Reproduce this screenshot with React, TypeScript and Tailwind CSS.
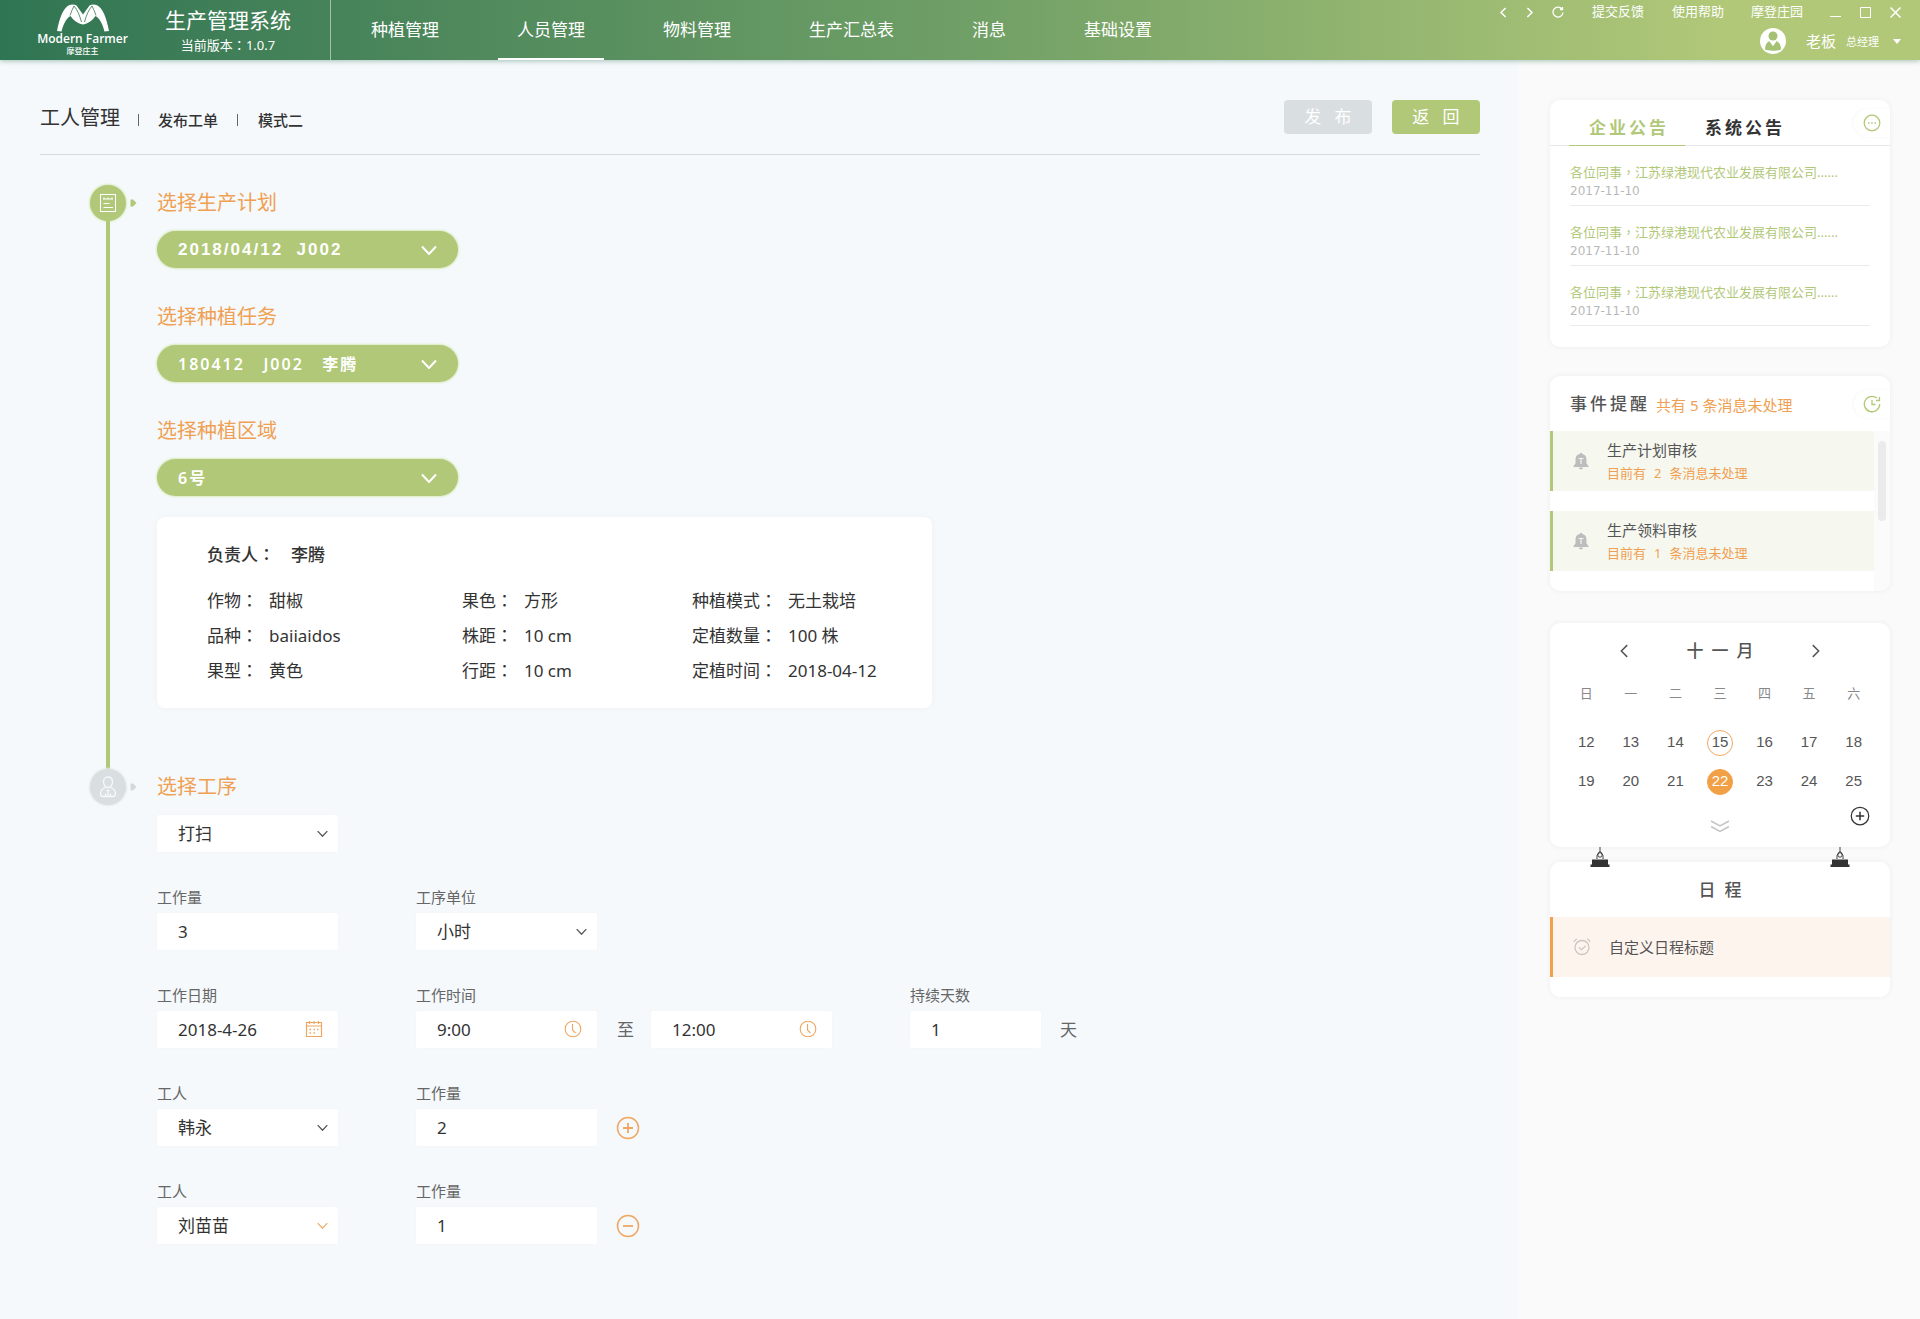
import type { ReactNode } from "react";

type IconProps = { className?: string };

function Chevron({ className = "", dir = "down", weight = 2 }: IconProps & { dir?: "down" | "left" | "right"; weight?: number }) {
  const d = { down: "M1 1.5 8 9 15 1.5", left: "M8 1 1.5 7.5 8 14", right: "M2 1 8.5 7.5 2 14" }[dir];
  return (
    <svg viewBox={dir === "down" ? "0 0 16 10" : "0 0 10 15"} className={className} fill="none" stroke="currentColor" strokeWidth={weight}>
      <path d={d} vectorEffect="non-scaling-stroke" />
    </svg>
  );
}

function Logo() {
  return (
    <svg viewBox="0 0 52 28" className="h-7 w-[52px]" fill="#fff">
      <path d="M0 27C2.500 14 6 4.500 11.500 1.500c2.500-1.200 6-1.200 8 0L26 10.500l6.500-9c2-1.200 5.500-1.200 8 0C46 4.500 49.500 14 52 27l-4.500.5C45.500 20 43 14.500 38.500 12 36 15.500 32 19.500 26 20.500 20 19.500 16 15.500 13.500 12 9 14.500 6.500 20 4.500 27.500z" />
      <path d="M17 2c3.500 4 5.500 9 7.500 16M35 2c-3.500 4-5.500 9-7.500 16M13 11.500C14 8 15.500 5 17 2M39 11.500C38 8 36.500 5 35 2" fill="none" stroke="#37794f" strokeWidth=".8" />
    </svg>
  );
}

function AvatarIcon() {
  return (
    <svg viewBox="0 0 26 26" className="size-[26px]">
      <circle cx="13" cy="13" r="13" fill="#fff" />
      <circle cx="13" cy="8" r="4.500" fill="#a5c274" />
      <path d="M5 21.500c0-4.500 1.500-7 4.500-8.500L13 18l3.500-5c3 1.500 4.500 4 4.500 8.500-2.500 1.500-13.500 1.500-16 0z" fill="#a5c274" />
      <path d="M9.500 13h7L13 18z" fill="#fff" />
    </svg>
  );
}

function ListIcon() {
  return (
    <svg viewBox="0 0 18 20" className="h-5 w-[18px]" fill="none" stroke="#fff" strokeWidth="1.100">
      <path d="M1.500 1.500h15v17h-15z" />
      <path d="M4 6h10M5 4.500v2M9 4.500v2M13 4.500v2M4.500 10.500h6M4.500 14.500h9.500" />
    </svg>
  );
}

function WorkerIcon() {
  return (
    <svg viewBox="0 0 18 22" className="h-[22px] w-[18px]" fill="none" stroke="#f7f9fa" strokeWidth="1.300">
      <path d="M9 1c3 0 4.500 2 4.500 5S11.500 11.500 9 11.500 4.500 9 4.500 6 6 1 9 1z" />
      <path d="M6.500 11.500C3.500 12.500 1.500 14.500 1.500 17.500c0 2 1 3 2.500 3h10c1.500 0 2.500-1 2.500-3 0-3-2-5-5-6M9 14v6M7.500 14.500h3M6.500 20.500v-3M11.500 20.500v-3" />
    </svg>
  );
}

function CalendarIcon() {
  return (
    <svg viewBox="0 0 18 18" className="size-[18px]" fill="none" stroke="#f0a661" strokeWidth="1.200">
      <path d="M1.500 2.500h15v14h-15zM1.500 6h15M4.500 1v3M9 1v3M13.500 1v3" />
      <path d="M4.500 9.500h1.500M8.500 9.500H10M12 9.500h1.500M4.500 13h1.500M8.500 13H10" strokeWidth="1.500" />
    </svg>
  );
}

function ClockIcon() {
  return (
    <svg viewBox="0 0 18 18" className="size-[18px]" fill="none" stroke="#f0a661" strokeWidth="1.100">
      <circle cx="9" cy="9" r="7.800" />
      <path d="M8.500 4v6l3 3" />
    </svg>
  );
}

function SignIcon({ plus = false, className = "" }: IconProps & { plus?: boolean }) {
  return (
    <svg viewBox="0 0 24 24" className={className} fill="none" stroke="currentColor">
      <circle cx="12" cy="12" r="10.500" strokeWidth="1.500" />
      <path d={plus ? "M7 12h10M12 7v10" : "M7 12h10"} strokeWidth="1.800" />
    </svg>
  );
}

function BellIcon() {
  return (
    <svg viewBox="0 0 16 18" className="h-[18px] w-4" fill="#bdbdbd">
      <path d="M8 .5l1.500 1.500c2.500.6 4 2.500 4 5.500v4l2 2.500v1H.5v-1l2-2.500v-4c0-3 1.500-4.900 4-5.500zM6 15.500h4c0 1.300-.8 2-2 2s-2-.7-2-2z" />
      <path d="M5.500 6.500h5M8 6.500v5.500" stroke="#f4f6ee" strokeWidth="1.200" />
    </svg>
  );
}

function AlarmIcon() {
  return (
    <svg viewBox="0 0 18 18" className="size-[18px]" fill="none" stroke="#cfc5c0" strokeWidth="1.300">
      <circle cx="9" cy="9.500" r="7" />
      <path d="M1 4c.5-1.500 1.500-2.500 3-3M17 4c-.5-1.500-1.500-2.500-3-3M6 9.500l2.500 2.200L12.500 8" />
    </svg>
  );
}

function ClipIcon() {
  return (
    <svg viewBox="0 0 20 20" className="size-5" fill="none" stroke="#333">
      <path d="M10 0v5M7 12V8.500L9 5h2l2 3.500V12" strokeWidth=".9" />
      <circle cx="10" cy="8" r="2.200" strokeWidth=".9" />
      <path d="M2 12.500h16v5h1.500V20H.5v-2.500H2z" fill="#333" stroke="none" />
    </svg>
  );
}

/** Full-width punctuation centred in its cell. */
function Mark({ children }: { children: string }) {
  return <span lang="zh-TW" className="font-['Noto_Sans_CJK_TC',sans-serif] leading-none">{children}</span>;
}

function Pill({ id, title, value, font }: { id: string; title: string; value: string; font: string }) {
  return (
    <div className="flex flex-col items-start gap-2.5">
      <label htmlFor={id} className="text-xl leading-9 text-[#f0a052]">{title}</label>
      <div className="relative">
        <select id={id} className={`h-[37px] w-[301px] appearance-none rounded-full bg-[#b1c878] pr-12 pl-[21px] tracking-[2px] text-white shadow-[0_0_2px_1px_#d9ebc0] outline-none ${font}`}>
          <option>{value}</option>
        </select>
        <Chevron className="pointer-events-none absolute top-[14px] right-[21px] h-2.5 w-4 text-white" />
      </div>
    </div>
  );
}

const control = "h-[37px] w-full appearance-none rounded-xs bg-white pl-[21px] text-[17px] text-[#333] shadow-[0_0_2px_#eef4f4] outline-none";

function Field({ id, label, children, className = "w-[181px]" }: { id: string; label: string; children: ReactNode; className?: string }) {
  return (
    <div className={`flex flex-col gap-1.5 ${className}`}>
      <label htmlFor={id} className="text-[15px] leading-[19px] text-[#666]">{label}</label>
      {children}
    </div>
  );
}

function Select({ id, value, label, accent = false }: { id: string; value: string; label?: string; accent?: boolean }) {
  return (
    <div className="relative">
      <select id={id} aria-label={label} className={control}>
        <option>{value}</option>
      </select>
      <Chevron weight={1.3} className={`pointer-events-none absolute top-[15px] right-2.5 h-[7px] w-[11px] ${accent ? "text-[#f0b070]" : "text-[#555]"}`} />
    </div>
  );
}

function Input({ id, value, label, icon }: { id: string; value: string; label?: string; icon?: ReactNode }) {
  return (
    <div className="relative">
      <input id={id} aria-label={label} defaultValue={value} className={control} />
      {icon && <span className="pointer-events-none absolute top-[9px] right-[15px]">{icon}</span>}
    </div>
  );
}

function Step({ icon, active = false, children }: { icon: ReactNode; active?: boolean; children: ReactNode }) {
  return (
    <section className="flex">
      <div className="flex w-[117px] shrink-0 pl-[50px]">
        <div className="flex w-9 flex-col items-center">
          <div className={`flex size-9 shrink-0 items-center justify-center rounded-full ${active ? "bg-[#b1c878] shadow-[0_0_2px_1px_#d9ebc0]" : "bg-[#d9dee0] shadow-[0_0_2px_1px_#e6eaec]"}`}>
            {icon}
          </div>
          {active && <div className="w-1 flex-1 bg-[#b1c878]" />}
        </div>
        <svg viewBox="0 0 7 8" className={`mt-3.5 ml-1 h-2 w-[7px] ${active ? "text-[#b1c878]" : "text-[#d3d9db]"}`}>
          <path d="M.5.500h2.500L6.500 4 3 7.500H.5z" fill="currentColor" />
        </svg>
      </div>
      {children}
    </section>
  );
}

function Card({ children, className = "" }: { children: ReactNode; className?: string }) {
  return <section className={`relative rounded-[10px] bg-white shadow-[0_0_5px_1px_rgba(0,0,0,0.04)] ${className}`}>{children}</section>;
}

function CornerButton({ label, children }: { label: string; children: ReactNode }) {
  return (
    <button aria-label={label} className="flex h-7 w-9 items-center justify-center rounded-l-full text-[#b1c878] shadow-[-1px_0_2px_1px_rgba(0,0,0,0.025)]">
      <svg viewBox="0 0 18 18" className="size-[18px]" fill="none" stroke="currentColor" strokeWidth="1.300">{children}</svg>
    </button>
  );
}

const nav = ["种植管理", "人员管理", "物料管理", "生产汇总表", "消息", "基础设置"];

const facts = [
  [["作物", "甜椒"], ["果色", "方形"], ["种植模式", "无土栽培"]],
  [["品种", "baiiaidos"], ["株距", "10 cm"], ["定植数量", "100 株"]],
  [["果型", "黄色"], ["行距", "10 cm"], ["定植时间", "2018-04-12"]],
];

const reminders = [
  { title: "生产计划审核", count: 2 },
  { title: "生产领料审核", count: 1 },
];

const weeks = [
  [12, 13, 14, 15, 16, 17, 18],
  [19, 20, 21, 22, 23, 24, 25],
];

const workers = [
  { name: "韩永", amount: "2", add: true },
  { name: "刘苗苗", amount: "1", add: false },
];

function Header() {
  return (
    <header className="relative z-10 flex h-[60px] bg-linear-to-r from-[#2f7553] via-[#6f9f66] to-[#b1c878] to-90% text-white shadow-[0_1px_5px_rgba(60,120,90,0.45)]">
      <div className="flex w-[331px] shrink-0 border-r border-white/50">
        <div className="ml-10 flex w-[85px] flex-col items-center pt-1">
          <Logo />
          <span className="mt-px font-['Open_Sans',sans-serif] text-xs leading-3 font-semibold whitespace-nowrap">Modern Farmer</span>
          <span className="text-[8px] leading-[11px] font-medium">摩登庄主</span>
        </div>
        <div className="ml-10 flex flex-col items-center pt-1.5">
          <h1 className="text-[21px] leading-7">生产管理系统</h1>
          <p className="text-[13px] leading-[22px]">当前版本<Mark>：</Mark>1.0.7</p>
        </div>
      </div>
      <nav className="ml-[21px] flex gap-10">
        {nav.map((item) => (
          <a key={item} href="#" className={`border-b-2 px-[19px] pt-px text-[17px] leading-[57px] whitespace-nowrap ${item === "人员管理" ? "border-white" : "border-transparent"}`}>
            {item}
          </a>
        ))}
      </nav>
      <div className="ml-auto flex flex-col items-end pr-[19px] text-[13px]">
        <div className="flex h-6 items-center">
          <button aria-label="后退"><Chevron dir="left" weight={1.5} className="h-[11px] w-[7px]" /></button>
          <button aria-label="前进" className="ml-[19px]"><Chevron dir="right" weight={1.5} className="h-[11px] w-[7px]" /></button>
          <button aria-label="刷新" className="ml-[19px]">
            <svg viewBox="0 0 12 12" className="size-3" fill="none" stroke="currentColor" strokeWidth="1.300">
              <path d="M10 3A5 5 0 1 0 11 6.500M10.500 1v2.500H8" />
            </svg>
          </button>
          <a href="#" className="ml-7">提交反馈</a>
          <a href="#" className="ml-7">使用帮助</a>
          <a href="#" className="ml-[27px]">摩登庄园</a>
          <button aria-label="最小化" className="ml-[27px]">
            <svg viewBox="0 0 11 11" className="size-[11px]" stroke="currentColor"><path d="M0 9.500h11" /></svg>
          </button>
          <button aria-label="最大化" className="ml-[19px]">
            <svg viewBox="0 0 11 11" className="size-[11px]" fill="none" stroke="currentColor"><path d="M.5.5h10v10H.5z" /></svg>
          </button>
          <button aria-label="关闭" className="ml-[19px]">
            <svg viewBox="0 0 11 11" className="size-[11px]" stroke="currentColor" strokeWidth="1.500"><path d="M.5.5l10 10M10.500.5l-10 10" /></svg>
          </button>
        </div>
        <button className="flex h-[34px] items-center">
          <AvatarIcon />
          <span className="ml-5 text-[15px]">老板</span>
          <span className="ml-2.5 pt-0.5 text-[11px]">总经理</span>
          <svg viewBox="0 0 8 5" className="ml-3.5 h-[5px] w-2" fill="currentColor"><path d="M0 0h8L4 5z" /></svg>
        </button>
      </div>
    </header>
  );
}

function WorkOrder() {
  return (
    <main className="flex-1 bg-[#f5f9fc] px-10 pt-10 pb-16 text-[#333] shadow-[1px_0_4px_#e9f2f8]">
      <div className="mr-[-2px] flex h-[55px] items-start border-b border-[#d6dadd]">
        <h2 className="text-xl leading-9">工人管理</h2>
        <span className="mt-3.5 ml-[18px] h-3 w-px bg-[#666]" />
        <span className="ml-[19px] text-[15px] leading-10 font-medium">发布工单</span>
        <span className="mt-3.5 ml-[19px] h-3 w-px bg-[#666]" />
        <span className="ml-5 text-[15px] leading-10 font-medium">模式二</span>
        <button className="ml-auto h-[34px] w-[88px] rounded bg-[#d9dee1] text-[17px] whitespace-pre text-white">{"发   布"}</button>
        <button className="ml-5 h-[34px] w-[88px] rounded bg-[#b1c878] text-[17px] whitespace-pre text-white">{"返   回"}</button>
      </div>

      <div className="pt-[30px]">
        <Step active icon={<ListIcon />}>
          <div className="pb-[61px]">
            <div className="flex flex-col gap-[31px]">
              <Pill id="plan" title="选择生产计划" value={"2018/04/12\u00a0\u00a0J002"} font="font-['Liberation_Sans',sans-serif] text-[17px] font-bold" />
              <Pill id="task" title="选择种植任务" value={"180412\u00a0\u00a0\u00a0J002\u00a0\u00a0\u00a0李腾"} font="text-base font-semibold" />
              <Pill id="area" title="选择种植区域" value="6号" font="text-base font-semibold" />
            </div>
            <div className="mt-[21px] w-[775px] rounded-lg bg-white px-[50px] pt-[26px] pb-5 text-[17px] shadow-[0_0_4px_1px_#f0f4f4]">
              <p className="mb-4 leading-6 font-medium">
                负责人<Mark>：</Mark><span className="ml-4">李腾</span>
              </p>
              <dl className="grid grid-cols-[255px_230px_auto] leading-[35px]">
                {facts.flat().map(([name, value]) => (
                  <div key={name} className="flex gap-[11px] whitespace-nowrap">
                    <dt>{name}<Mark>：</Mark></dt>
                    <dd>{value}</dd>
                  </div>
                ))}
              </dl>
            </div>
          </div>
        </Step>

        <Step icon={<WorkerIcon />}>
          <div className="flex flex-col gap-9">
            <div className="flex w-[181px] flex-col gap-2.5">
              <label htmlFor="process" className="text-xl leading-9 text-[#f0a052]">选择工序</label>
              <Select id="process" value="打扫" />
            </div>
            <div className="flex gap-[78px]">
              <Field id="amount" label="工作量"><Input id="amount" value="3" /></Field>
              <Field id="unit" label="工序单位"><Select id="unit" value="小时" /></Field>
            </div>
            <div className="flex items-end">
              <Field id="date" label="工作日期"><Input id="date" value="2018-4-26" icon={<CalendarIcon />} /></Field>
              <Field id="from" label="工作时间" className="ml-[78px] w-[181px]"><Input id="from" value="9:00" icon={<ClockIcon />} /></Field>
              <span className="ml-5 text-[17px] leading-9 text-[#666]">至</span>
              <div className="ml-[17px] w-[181px]"><Input id="to" label="结束时间" value="12:00" icon={<ClockIcon />} /></div>
              <Field id="days" label="持续天数" className="ml-[78px] w-[131px]"><Input id="days" value="1" /></Field>
              <span className="ml-[19px] text-[17px] leading-9 text-[#666]">天</span>
            </div>
            {workers.map(({ name, amount, add }) => (
              <div key={name} className="flex items-end">
                <Field id={`worker-${name}`} label="工人"><Select id={`worker-${name}`} value={name} accent={!add} /></Field>
                <Field id={`amount-${name}`} label="工作量" className="ml-[78px] w-[181px]"><Input id={`amount-${name}`} value={amount} /></Field>
                <button aria-label={add ? "添加工人" : "移除工人"} className="mb-1.5 ml-[19px] text-[#f0a661]">
                  <SignIcon plus={add} className="size-6" />
                </button>
              </div>
            ))}
          </div>
        </Step>
      </div>
    </main>
  );
}

function Sidebar() {
  return (
    <aside className="flex w-[402px] shrink-0 flex-col bg-[#fafafa] pt-10 pr-[30px] pl-8 text-[#555]">
      <Card className="pb-[21px]">
        <div className="flex h-[46px] border-b border-[#e6e8ea] pl-[19px] text-[17px] leading-[55px] font-bold tracking-[3px]">
          <button className="-mb-px border-b border-[#b1c878] pr-4 pl-5 text-[#b1c878]">企业公告</button>
          <button className="ml-5 text-[#333]">系统公告</button>
          <div className="mt-[9px] ml-auto leading-none">
            <CornerButton label="更多公告">
              <circle cx="9" cy="9" r="7.800" />
              <path d="M5 9h1.500M8.200 9h1.500M11.500 9H13" />
            </CornerButton>
          </div>
        </div>
        <ul className="px-5">
          {[0, 1, 2].map((i) => (
            <li key={i} className="h-[60px] border-b border-[#e8eaec] pt-4 text-[13px] leading-5">
              <a href="#" className="block whitespace-nowrap text-[#b1c878]">各位同事<Mark>，</Mark>江苏绿港现代农业发展有限公司......</a>
              <time className="block font-['DejaVu_Sans',sans-serif] text-xs leading-[18px] text-[#b9b9b9]">2017-11-10</time>
            </li>
          ))}
        </ul>
      </Card>

      <Card className="mt-[29px] pb-5">
        <div className="flex h-[55px] items-center pl-5">
          <h3 className="text-[17px] font-medium tracking-[3px]">事件提醒</h3>
          <span className="ml-1.5 pt-1 text-[15px] text-[#f0a052]">共有 5 条消息未处理</span>
          <div className="ml-auto">
            <CornerButton label="刷新提醒">
              <path d="M13.800 3A7.700 7.700 0 1 0 16.700 9M13 5.500h3.500V2M9 5v4.500h3.500" />
            </CornerButton>
          </div>
        </div>
        <ul className="mr-4 flex flex-col gap-5">
          {reminders.map(({ title, count }) => (
            <li key={title} className="flex h-[60px] items-center border-l-3 border-[#b1c878] bg-[#f6f8f0] pl-5">
              <BellIcon />
              <div className="ml-[18px]">
                <p className="text-[15px] leading-[23px]">{title}</p>
                <p className="text-[13px] leading-[22px] text-[#f0a052]">目前有<span className="mx-2">{count}</span>条消息未处理</p>
              </div>
            </li>
          ))}
        </ul>
        <div className="absolute right-0 bottom-0 h-40 w-4 rounded-br-[10px] bg-[#fbfbfb] pt-2.5 pl-1">
          <div className="h-20 w-2 rounded-full bg-[#ebebeb]" />
        </div>
      </Card>

      <Card className="mt-8 px-3.5 pt-[15px]">
        <div className="flex h-[26px] items-center justify-center">
          <button aria-label="上个月"><Chevron dir="left" weight={1.5} className="h-[14px] w-[9px]" /></button>
          <h3 className="w-[182px] pl-2 text-center text-[17px] font-medium tracking-[8px]">十一月</h3>
          <button aria-label="下个月"><Chevron dir="right" weight={1.5} className="h-[14px] w-[9px]" /></button>
        </div>
        <table className="w-full table-fixed text-center">
          <thead>
            <tr className="h-[59px] text-[13px] text-[#888]">
              {["日", "一", "二", "三", "四", "五", "六"].map((d) => <th key={d} scope="col" className="font-normal">{d}</th>)}
            </tr>
          </thead>
          <tbody>
            {weeks.map((week) => (
              <tr key={week[0]} className="h-[39px] font-['Liberation_Sans',sans-serif] text-[15px]">
                {week.map((day) => (
                  <td key={day} className="p-0">
                    <button className={`size-[26px] rounded-full border ${day === 22 ? "border-[#f2a046] bg-[#f2a046] text-white" : day === 15 ? "border-[#f0a661]" : "border-transparent"}`}>{day}</button>
                  </td>
                ))}
              </tr>
            ))}
          </tbody>
        </table>
        <div className="grid h-[46px] grid-cols-3 items-start pr-1.5">
          <span />
          <button aria-label="展开日历" className="mt-[19px] ml-1.5 justify-self-center text-[#c4c4c4]">
            <svg viewBox="0 0 20 13" className="h-[13px] w-5" fill="none" stroke="currentColor" strokeWidth="1.500"><path d="M1 1l9 5 9-5M1 6.500l9 5 9-5" /></svg>
          </button>
          <button aria-label="新建日程" className="mt-[5px] justify-self-end text-[#333]"><SignIcon plus className="size-5" /></button>
        </div>
      </Card>

      <Card className="mt-[15px] pb-5">
        <span className="absolute -top-[15px] left-10"><ClipIcon /></span>
        <span className="absolute -top-[15px] right-10"><ClipIcon /></span>
        <h3 className="text-center text-[17px] leading-[55px] font-medium whitespace-pre">{"日  程"}</h3>
        <div className="flex h-[60px] items-center border-l-3 border-[#f0a04f] bg-[#fef4ee] pl-5">
          <AlarmIcon />
          <p className="ml-[18px] text-[15px]">自定义日程标题</p>
        </div>
      </Card>
    </aside>
  );
}

export default function App() {
  return (
    <div className="flex min-h-screen flex-col font-['Noto_Sans','Noto_Sans_CJK_SC',sans-serif]" lang="zh-CN">
      <Header />
      <div className="flex flex-1">
        <WorkOrder />
        <Sidebar />
      </div>
    </div>
  );
}
